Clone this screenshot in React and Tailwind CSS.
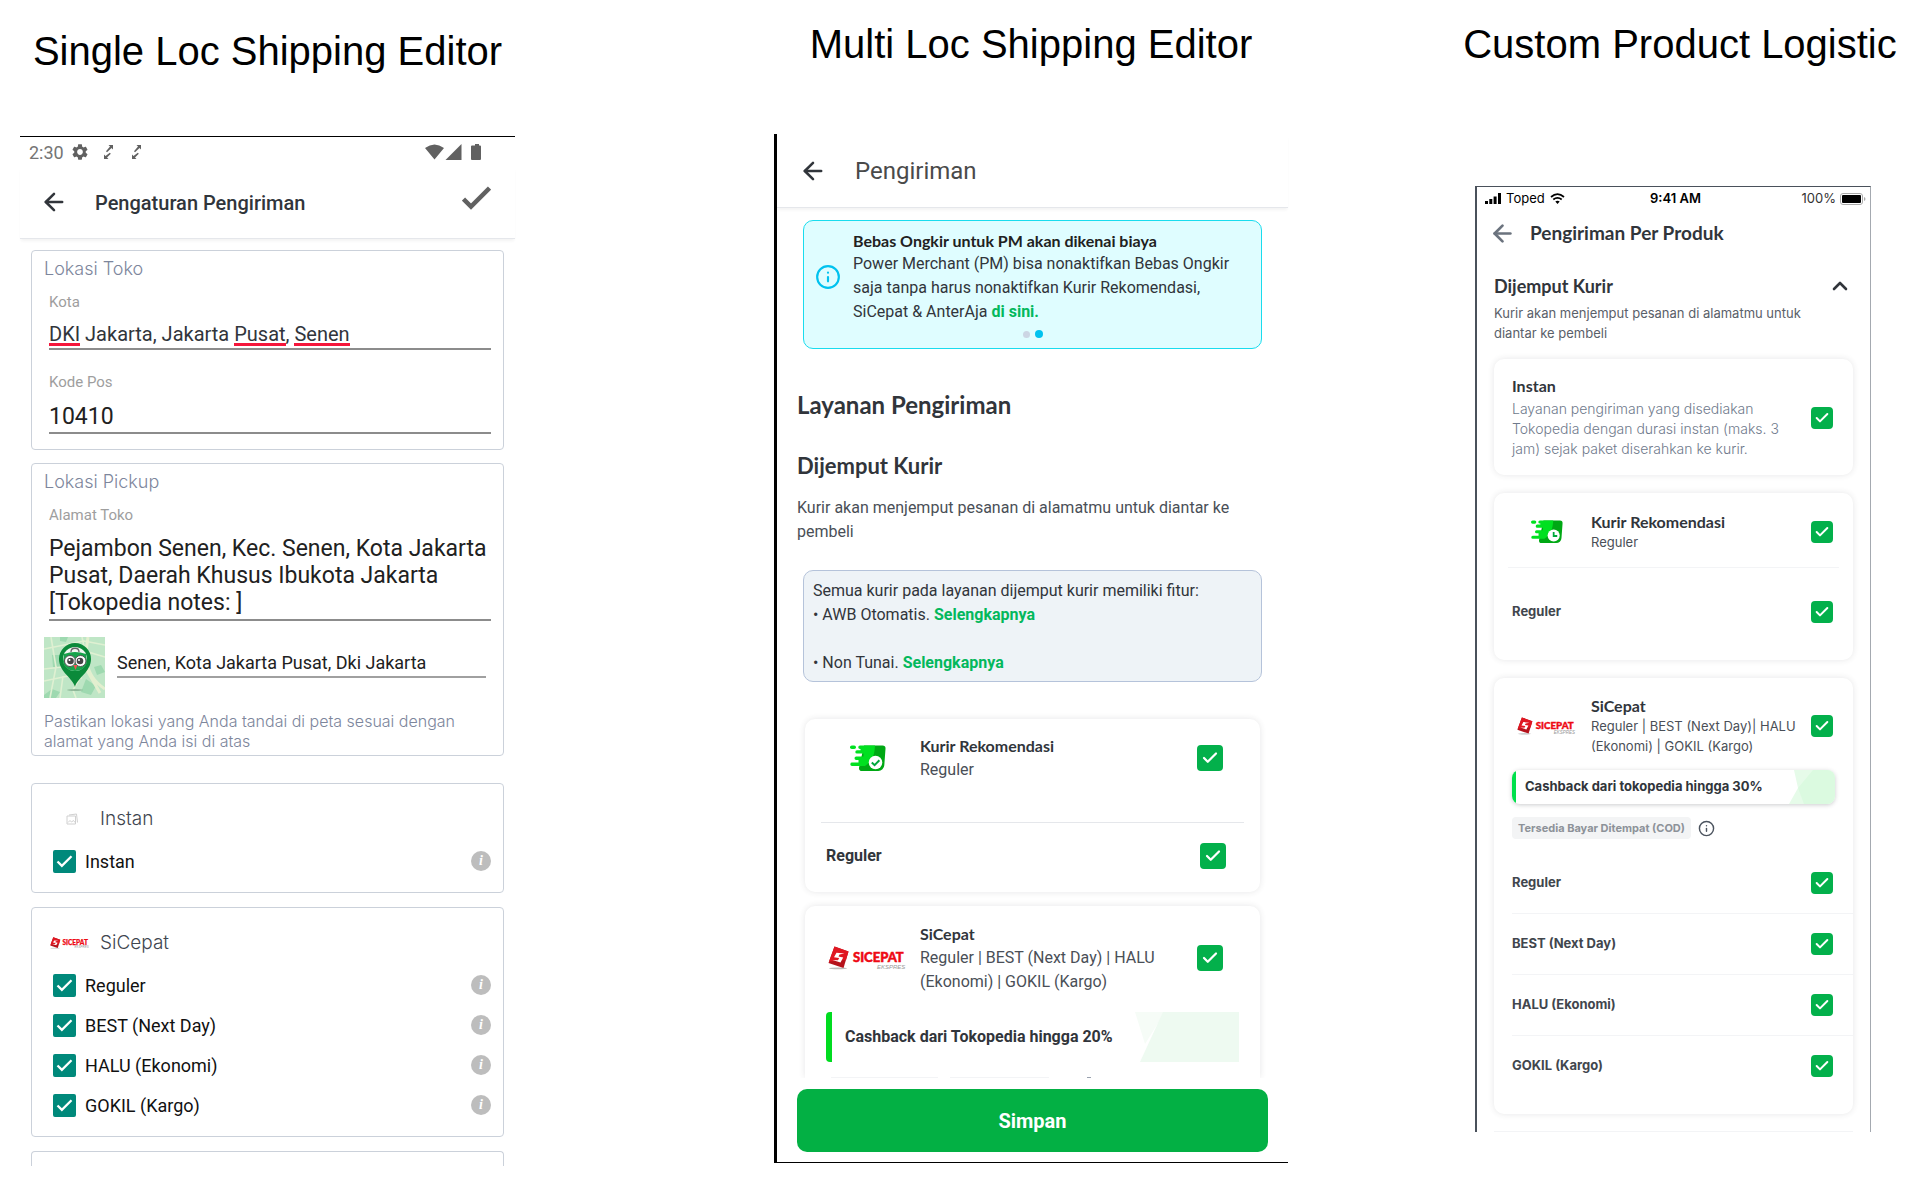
import React from "react";
import { ArrowLeft, Check, ChevronUp, Info } from "lucide-react";

const ROBOTO = "font-['Roboto',sans-serif]";
const INTER = "font-['Inter',sans-serif]";
const LATO = "font-['Lato',sans-serif]";

function Title({ children }) {
  return (
    <h1 className="text-center font-['Liberation_Sans',sans-serif] text-[40px] leading-[48px] whitespace-nowrap text-black">
      {children}
    </h1>
  );
}

function TealCheckbox({ id }) {
  return (
    <span className="grid size-[23px] shrink-0">
      <input id={id} type="checkbox" defaultChecked className="peer col-start-1 row-start-1 size-full appearance-none rounded-xs border-2 border-[#00897b] checked:bg-[#00897b]" />
      <Check className="pointer-events-none invisible col-start-1 row-start-1 size-[21px] place-self-center text-white peer-checked:visible" strokeWidth={2.6} strokeLinecap="butt" strokeLinejoin="miter" />
    </span>
  );
}

function GreenCheckbox({ id, label, small }) {
  return (
    <span className={small ? "grid size-[22px] shrink-0" : "grid size-[26px] shrink-0"}>
      <input id={id} aria-label={label} type="checkbox" defaultChecked className="peer col-start-1 row-start-1 size-full appearance-none rounded border-2 border-[#03b04b] checked:bg-[#03b04b]" />
      <Check className={small ? "pointer-events-none invisible col-start-1 row-start-1 size-4 place-self-center text-white peer-checked:visible" : "pointer-events-none invisible col-start-1 row-start-1 size-[18px] place-self-center text-white peer-checked:visible"} strokeWidth={3} />
    </span>
  );
}

function SiCepatLogo({ className }) {
  return (
    <svg viewBox="0 0 80 24" className={className} role="img" aria-label="SiCepat Ekspres">
      <ellipse cx="10" cy="22.4" rx="9" ry="0.8" fill="#bbb" />
      <path d="M6.500 0.500 20.500 5.500 15.500 22 0.500 17Z" fill="#b5121b" />
      <path d="M6.500 0.500 20.500 5.500 18 14 1 15.500Z" fill="#e01722" />
      <path d="M16.500 7.500 8.500 6.800 6 11.200 11.200 12 10 14.200 4.500 14 12.500 16.500 15.200 11.400 10.500 10.500 11.500 8.500Z" fill="#fff" />
      <text x="25" y="15.500" fontFamily="Lato" fontWeight="900" fontSize="13" fill="#ee0a14" stroke="#ee0a14" strokeWidth="0.5">SICEPAT</text>
      <text x="49" y="22.500" fontFamily="Liberation Sans" fontStyle="italic" fontSize="6" fill="#999">EKSPRES</text>
    </svg>
  );
}

function ExpressBox({ className, clock }) {
  return (
    <svg viewBox="0 0 36 27" className={className} role="img" aria-label="Kurir Rekomendasi">
      <path d="M14 .5h18.500a3 3 0 0 1 3 3.300l-1.200 16.500a6 6 0 0 1-6 5.700H12a3 3 0 0 1-3-3.200Z" fill="#00a814" />
      <path d="M10 .5h15c-.5 10-3 16-10 20.500H2a1.700 1.700 0 0 1 0-3.400h6.500v-2.600H6.200a1.700 1.700 0 0 1 0-3.400h7.300V8.600H7a1.700 1.700 0 0 1 0-3.400h3.500V4H10A1.700 1.700 0 0 1 10 .5Z" fill="#00e020" />
      <rect y=".5" width="6" height="3.600" rx="1.800" fill="#00e020" />
      <circle cx="25.500" cy="17.500" r="6.800" fill="#fff" />
      {clock ? (
        <path d="M25.500 13.500V18h4" fill="none" stroke="#00a83c" strokeWidth="2" />
      ) : (
        <path d="m21.800 17.500 2.800 2.700 4.800-5" fill="none" stroke="#00a83c" strokeWidth="2" />
      )}
    </svg>
  );
}

function MapThumb() {
  return (
    <svg viewBox="0 0 61 61" className="size-[61px] shrink-0" role="img" aria-label="Peta lokasi">
      <rect width="61" height="61" fill="#bfe6c6" />
      <path d="M0 58 8 52 16 55 12 61H0ZM42 42l10 7-5 9-10-3ZM8 18h8v12H9ZM16 0h8l-2 5-6-1ZM50 30l7-2 4 7-8 3Z" fill="#9ed9b0" />
      <path d="M0 12 40 4 61 8M0 44l24-5 14 2M6 61 12 30 7 0M38 0l3 14 20 6M16 61l3-22M0 32l18-2M32 61l-3-8 8-14" fill="none" stroke="#dff0d2" strokeWidth="1.600" />
      <path d="M44 0l-3 22c4 14 8 22 20 30M40 28l16 28" fill="none" stroke="#e3efcf" strokeWidth="3" />
      <ellipse cx="31" cy="53" rx="8" ry=".8" fill="#7fa98a" />
      <path d="M31 50C29 41 15 35 15 22a16 16 0 0 1 32 0c0 13-14 19-16 28Z" fill="#0b8a3a" />
      <circle cx="31" cy="22" r="12" fill="#f2f7f2" />
      <path d="M20 17q11-4 22 0l1 8c-1 6-7 9-12 9s-11-3-12-9Z" fill="#16a34a" />
      <path d="M27 15c0-5 8-5 8 0" fill="none" stroke="#666" strokeWidth="1.300" />
      <circle cx="26" cy="24" r="5.500" fill="#fff" stroke="#555" strokeWidth="1" />
      <circle cx="36.500" cy="24" r="5.500" fill="#fff" stroke="#555" strokeWidth="1" />
      <circle cx="26.500" cy="24" r="3.300" fill="#444" />
      <circle cx="36" cy="24" r="3.300" fill="#444" />
      <circle cx="25.500" cy="23" r="1" fill="#fff" />
      <circle cx="35" cy="23" r="1" fill="#fff" />
      <path d="M29.500 28h4l-2 5Z" fill="#ef5350" />
    </svg>
  );
}

function DebugArrows() {
  return (
    <svg viewBox="0 0 10 16" className="h-4 w-2.5" fill="#616161" aria-hidden="true">
      <path d="M4.500 1H9v4.500L7.500 4 3 8.200 2 7.200 6 2.600ZM0 15v-4.500L1.500 12 5.800 8.800l1 1L3 13.400 4.500 15Z" />
    </svg>
  );
}

function InfoDot({ label }) {
  return (
    <button aria-label={label} className="flex size-5 items-center justify-center rounded-full bg-[#bdbdbd] font-['Liberation_Serif',serif] text-[14px] leading-5 font-bold text-white italic">
      i
    </button>
  );
}

function CourierCard({ icon, name, services }) {
  return (
    <section className="mt-3.5 rounded border border-[#cbd1da] pt-[23px] pb-[11px]">
      <h3 className={"flex h-6 items-center text-[19px] font-light text-[#3f4650] " + INTER}>
        <span className="flex w-[52px] shrink-0 justify-center pl-1">{icon}</span>
        <span className="pl-4">{name}</span>
      </h3>
      <div className="mt-[10px]">
        {services.map((s) => (
          <div key={s} className="flex h-10 items-center pr-3 pl-[21px]">
            <TealCheckbox id={"single-" + name + s} />
            <label htmlFor={"single-" + name + s} className="flex-1 pl-[9px] text-[18px] text-[#111]">{s}</label>
            <InfoDot label={"Info " + s} />
          </div>
        ))}
      </div>
    </section>
  );
}

const sectionLabel = "text-[18px] leading-6 font-light text-[#7d869c] ";

function SingleLoc() {
  return (
    <div className={"mt-[61px] border-t border-black pt-px " + ROBOTO}>
      <div className="flex h-7 items-center pr-[34px] pl-[9px] text-[18px] text-[#757575]">
        <span>2:30</span>
        <svg viewBox="2 2 20 20" className="ml-2 size-4" fill="#616161" aria-hidden="true">
          <path d="M19.140 12.940c.04-.3.06-.61.06-.94 0-.32-.02-.64-.07-.94l2.030-1.580c.18-.14.23-.41.12-.61l-1.920-3.320c-.12-.22-.37-.29-.59-.22l-2.390.96c-.5-.38-1.030-.7-1.620-.94l-.36-2.540c-.04-.24-.24-.41-.48-.41h-3.840c-.24 0-.43.17-.47.41l-.36 2.540c-.59.24-1.130.57-1.620.94l-2.390-.96c-.22-.08-.47 0-.59.22L2.740 8.870c-.12.21-.08.47.12.61l2.030 1.580c-.05.3-.09.63-.09.94s.02.64.07.94l-2.030 1.580c-.18.14-.23.41-.12.61l1.920 3.320c.12.22.37.29.59.22l2.390-.96c.5.38 1.030.7 1.620.94l.36 2.540c.05.24.24.41.48.41h3.840c.24 0 .44-.17.47-.41l.36-2.540c.59-.24 1.130-.56 1.620-.94l2.390.96c.22.08.47 0 .59-.22l1.920-3.320c.12-.22.07-.47-.12-.61l-2.010-1.580zM12 15.600c-1.980 0-3.600-1.620-3.600-3.600s1.620-3.600 3.600-3.600 3.600 1.620 3.600 3.600-1.620 3.600-3.600 3.600z" />
        </svg>
        <span className="ml-4 flex gap-[18px]"><DebugArrows /><DebugArrows /></span>
        <svg viewBox="0 0 56 16" className="ml-auto h-4 w-14" fill="#616161" aria-hidden="true">
          <path d="M0 4Q9.500-3 19 4L9.500 15.500ZM36.500 0v16H20.500ZM48 1.500h2V0h4v1.500h1a1 1 0 0 1 1 1V15a1 1 0 0 1-1 1h-8a1 1 0 0 1-1-1V2.500a1 1 0 0 1 1-1Z" />
        </svg>
      </div>
      <header className="flex h-[73px] items-center border-b border-gray-200 pr-6 pl-5 shadow-[0_3px_3px_-1px_rgba(0,0,0,0.05)]">
        <button aria-label="Kembali" className="text-[#31353b]"><ArrowLeft className="size-7" strokeWidth={2.2} /></button>
        <h2 className="flex-1 pt-px pl-[27px] text-[20px] font-medium text-[#31353b]">Pengaturan Pengiriman</h2>
        <button aria-label="Simpan pengaturan">
          <svg viewBox="0 0 29 24" className="mb-2 h-6 w-[29px]" fill="none" stroke="#616161" strokeWidth="4.500" aria-hidden="true">
            <path d="M1.500 13 9 20.500 27.500 2" />
          </svg>
        </button>
      </header>
      <div className="px-[11px] pt-[11px]">
        <section className="rounded border border-[#cbd1da] px-3 pt-1.5 pb-[15px]">
          <h3 className={sectionLabel + INTER}>Lokasi Toko</h3>
          <div className="pl-[5px]">
            <div id="kota" className="mt-[11px] text-[15px] leading-5 text-[#9e9e9e]">Kota</div>
            <div role="textbox" aria-labelledby="kota" contentEditable suppressContentEditableWarning spellCheck={false} className="mt-2 border-b-2 border-[#8c8c8c] text-[20px] leading-7 text-[#31353b] outline-none">
              <span className="inline-block h-[26px] border-b-3 border-[#f5163b]">DKI</span> Jakarta, Jakarta{" "}
              <span className="inline-block h-[26px] border-b-3 border-[#f5163b]">Pusat</span>,{" "}
              <span className="inline-block h-[26px] border-b-3 border-[#f5163b]">Senen</span>
            </div>
            <label htmlFor="pos" className="mt-[22px] block text-[15px] leading-5 text-[#9e9e9e]">Kode Pos</label>
            <input id="pos" defaultValue="10410" className="mt-[10px] block h-8 w-full border-b-2 border-[#8c8c8c] text-[23px] text-[#212121] outline-none" />
          </div>
        </section>
        <section className="mt-[13px] rounded border border-[#cbd1da] px-3 pt-1.5 pb-1">
          <h3 className={sectionLabel + INTER}>Lokasi Pickup</h3>
          <div className="pl-[5px]">
            <label htmlFor="alamat" className="mt-[11px] block text-[15px] leading-5 text-[#9e9e9e]">Alamat Toko</label>
            <textarea id="alamat" rows={3} defaultValue="Pejambon Senen, Kec. Senen, Kota Jakarta Pusat, Daerah Khusus Ibukota Jakarta [Tokopedia notes: ]" className="mt-[10px] block w-full resize-none overflow-hidden border-b-2 border-[#8c8c8c] pb-[3px] text-[23px] leading-[27px] text-[#212121] outline-none" />
          </div>
          <div className="mt-4 flex items-start gap-3 pr-[5px]">
            <MapThumb />
            <input aria-label="Lokasi peta" defaultValue="Senen, Kota Jakarta Pusat, Dki Jakarta" className="mt-3 h-[29px] min-w-0 flex-1 border-b-2 border-[#a0a0a0] text-[18px] text-[#212121] outline-none" />
          </div>
          <p className={"mt-[13px] text-[16px] leading-5 font-light text-[#7d869c] " + INTER}>
            Pastikan lokasi yang Anda tandai di peta sesuai dengan alamat yang Anda isi di atas
          </p>
        </section>
        <div className="mt-[27px]">
          <CourierCard
            icon={
              <svg viewBox="0 0 12 12" className="ml-6 size-3 shrink-0" fill="none" stroke="#d0d0d0" aria-hidden="true">
                <path d="M3 2 10.500 1l1 8.500M1 3h8.500v8H1Zm1 6.500 2-2 1.500 1.500 2-1.500 1.500 2" />
              </svg>
            }
            name="Instan"
            services={["Instan"]}
          />
          <CourierCard icon={<SiCepatLogo className="ml-5 h-3 w-10 shrink-0" />} name="SiCepat" services={["Reguler", "BEST (Next Day)", "HALU (Ekonomi)", "GOKIL (Kargo)"]} />
          <div className="mt-3.5 h-[15px] rounded-t border border-b-0 border-[#cbd1da]" />
        </div>
      </div>
    </div>
  );
}

function MultiCourier({ id, logo, name, desc, className }) {
  return (
    <div className={"flex items-center pr-[37px] text-[16px] leading-6 " + className}>
      <span className="flex w-[115px] shrink-0 justify-center pl-2.5">{logo}</span>
      <div className="flex-1">
        <label htmlFor={id} className={"block font-bold text-[#31353b] " + LATO}>{name}</label>
        <p className="max-w-[240px] text-[#4a4f57]">{desc}</p>
      </div>
      <GreenCheckbox id={id} />
    </div>
  );
}

const card = "rounded-[10px] bg-white shadow-[0_0_6px_rgba(49,53,59,0.12)]";

function MultiLoc() {
  return (
    <div className={"mt-[66px] border-b border-l-3 border-black " + ROBOTO}>
      <header className="flex h-[74px] items-center border-b border-gray-200 pl-[22px] shadow-[0_3px_3px_-1px_rgba(0,0,0,0.05)]">
        <button aria-label="Kembali" className="text-[#31353b]"><ArrowLeft className="size-7" strokeWidth={2.2} /></button>
        <h2 className="pl-7 text-[24px] text-[#4a4a4a]">Pengiriman</h2>
      </header>
      <div className="mx-[26px] mt-3 rounded-[10px] border border-[#19dcee] bg-[#dffdff] pt-[9px] pb-2.5">
        <div className="flex items-center gap-3 pl-[11px]">
          <Info className="size-[26px] shrink-0 text-[#00c2ef]" strokeWidth={2} />
          <div className="text-[16px] leading-6 text-[#31353b]">
            <h3 className={"leading-[22px] font-bold text-[#212121] " + LATO}>Bebas Ongkir untuk PM akan dikenai biaya</h3>
            <p className="max-w-[380px]">
              Power Merchant (PM) bisa nonaktifkan Bebas Ongkir saja tanpa harus nonaktifkan Kurir Rekomendasi, SiCepat &amp; AnterAja{" "}
              <a href="#pm" className="font-bold text-[#03b85c]">di sini.</a>
            </p>
          </div>
        </div>
        <div className="mt-1.5 flex h-2 items-center justify-center gap-[5px]">
          <span className="size-[7px] rounded-full bg-[#ccd6e4]" />
          <span className="size-2 rounded-full bg-[#00c2ef]" />
        </div>
      </div>
      <div className="px-5">
        <h2 className={"mt-[42px] text-[24px] leading-7 font-bold text-[#31353b] " + LATO}>Layanan Pengiriman</h2>
        <h3 className={"mt-[33px] text-[22px] leading-7 font-bold text-[#31353b] " + LATO}>Dijemput Kurir</h3>
        <p className="mt-4 max-w-[440px] text-[16px] leading-6 text-[#4a4f57]">Kurir akan menjemput pesanan di alamatmu untuk diantar ke pembeli</p>
      </div>
      <div className="mx-[26px] mt-[26px] rounded-[10px] border border-[#b5c3da] bg-[#eef3f7] px-[9px] pt-2 pb-1.5 text-[16px] leading-6 text-[#31353b]">
        <p>Semua kurir pada layanan dijemput kurir memiliki fitur:</p>
        <p>• AWB Otomatis. <a href="#awb" className="font-bold text-[#03b85c]">Selengkapnya</a></p>
        <p className="mt-6">• Non Tunai. <a href="#tunai" className="font-bold text-[#03b85c]">Selengkapnya</a></p>
      </div>
      <section className={"mx-7 mt-[37px] pb-[3px] " + card}>
        <MultiCourier className="pt-[15px]" id="multi-rek" logo={<ExpressBox className="h-[27px] w-9" />} name="Kurir Rekomendasi" desc="Reguler" />
        <div className="mx-4 mt-10 border-t border-gray-200" />
        <div className="flex h-[66px] items-center justify-between pr-[34px] pl-[21px]">
          <label htmlFor="multi-reg" className="text-[16px] font-bold text-[#31353b]">Reguler</label>
          <GreenCheckbox id="multi-reg" />
        </div>
      </section>
      <div className="overflow-hidden px-7 pt-3.5">
        <section className="rounded-t-[10px] bg-white shadow-[0_0_6px_rgba(49,53,59,0.12)]">
          <MultiCourier className="pt-4" id="multi-sicepat" logo={<SiCepatLogo className="h-6 w-20" />} name="SiCepat" desc="Reguler | BEST (Next Day) | HALU (Ekonomi) | GOKIL (Kargo)" />
          <div className="mt-[18px] mr-[21px] ml-[21px] flex h-[50px] items-stretch justify-between">
            <p className="flex items-center rounded-l border-l-6 border-[#00dc20] pl-[13px] text-[16px] font-bold text-[#31353b]">Cashback dari Tokopedia hingga 20%</p>
            <svg viewBox="0 0 104 50" className="h-[50px] w-[104px]" aria-hidden="true">
              <path d="M0 0h30L10 32Z" fill="#f6fcf7" />
              <path d="M28 0h76v50H5Z" fill="#eefaf1" />
            </svg>
          </div>
          <div className="mt-[15px] flex h-px gap-3 pl-[26px]">
            <span className="w-[107px] bg-gray-100" />
            <span className="w-[99px] bg-gray-100" />
            <span className="ml-[26px] w-1 bg-gray-400" />
          </div>
        </section>
      </div>
      <div className="px-5 pt-[11px] pb-[10px]">
        <button className="block h-[63px] w-full rounded-[10px] bg-[#03b044] text-[20px] font-bold text-white">Simpan</button>
      </div>
    </div>
  );
}

function ProductCourier({ id, logo, name, desc, className }) {
  return (
    <div className={"flex items-center pr-5 leading-5 " + className}>
      <span className="flex w-[97px] shrink-0 justify-center pl-2">{logo}</span>
      <div className="flex-1">
        <label htmlFor={id} className={"block text-[16px] font-bold text-[#31353b] " + LATO}>{name}</label>
        <p className="max-w-[212px] text-[13px] whitespace-pre-line text-[#4a4f57]">{desc}</p>
      </div>
      <GreenCheckbox id={id} small />
    </div>
  );
}

function ProductLogistic() {
  return (
    <div className={"mt-[118px] mr-7 ml-3.5 border-t border-r border-l-2 border-[#4a515b] border-r-[#a4a9b0] " + INTER}>
      <div className="grid h-[23px] grid-cols-3 items-center pr-1 pl-2 text-[13px] text-black">
        <span className="flex items-center gap-[5px]">
          <svg viewBox="0 0 16 11" className="h-[11px] w-4" aria-hidden="true">
            <path d="M0 8h3v3H0ZM4.300 6h3v5h-3ZM8.600 3.500h3V11h-3ZM13 0h3v11h-3Z" />
          </svg>
          Toped
          <svg viewBox="0 0 15 11" className="h-[11px] w-[15px]" aria-hidden="true">
            <path d="M1 4Q7.500-1.800 14 4M3.300 6.500q4.200-3.400 8.400 0" fill="none" stroke="#000" strokeWidth="1.700" />
            <path d="M5.300 8.600q2.200-1.700 4.400 0L7.500 11Z" />
          </svg>
        </span>
        <span className="text-center font-semibold">9:41 AM</span>
        <span className="flex items-center justify-end gap-1 text-[#333]">
          100%
          <svg viewBox="0 0 26 12" className="h-3 w-[26px]" aria-hidden="true">
            <rect x=".5" y=".5" width="22" height="11" rx="2.500" fill="none" stroke="#aaa" />
            <rect x="2" y="2" width="19" height="8" rx="1" />
            <path d="M24 4v4q1.500-.5 1.500-2T24 4Z" fill="#aaa" />
          </svg>
        </span>
      </div>
      <header className="flex h-[46px] items-center pl-3">
        <button aria-label="Kembali" className="text-[#6b737e]"><ArrowLeft className="size-[27px]" strokeWidth={2.4} /></button>
        <h2 className={"pl-3.5 text-[19px] font-bold text-[#31353b] " + LATO}>Pengiriman Per Produk</h2>
      </header>
      <div className="mt-[18px] pr-[18px] pl-[17px]">
        <div className="flex items-center justify-between">
          <h3 className={"text-[18px] leading-6 font-bold text-[#31353b] " + LATO}>Dijemput Kurir</h3>
          <button aria-label="Tutup bagian"><ChevronUp className="size-6 text-[#31353b]" strokeWidth={2.6} /></button>
        </div>
        <p className="mt-[5px] max-w-[320px] text-[13px] leading-5 text-[#5a6069]">Kurir akan menjemput pesanan di alamatmu untuk diantar ke pembeli</p>
      </div>
      <div className="overflow-hidden px-[17px] pt-4">
        <section className={"flex items-center pt-[17px] pr-5 pb-4 pl-[18px] " + card}>
          <div className="flex-1">
            <label htmlFor="prod-instan" className={"block text-[16px] leading-5 font-bold text-[#31353b] " + LATO}>Instan</label>
            <p className="mt-[3px] max-w-[272px] text-[14px] leading-5 font-light text-[#6f7a8c]">Layanan pengiriman yang disediakan Tokopedia dengan durasi instan (maks. 3 jam) sejak paket diserahkan ke kurir.</p>
          </div>
          <GreenCheckbox id="prod-instan" small />
        </section>
        <section className={"mt-[18px] pb-1 " + card}>
          <ProductCourier className="pt-[19px]" id="prod-rek" logo={<ExpressBox clock className="h-6 w-8" />} name="Kurir Rekomendasi" desc="Reguler" />
          <div className="mx-3.5 mt-[15px] border-t border-gray-100" />
          <div className="flex h-[88px] items-center justify-between pr-5 pl-[18px]">
            <label htmlFor="prod-reg" className="text-[13px] font-bold text-[#41464d]">Reguler</label>
            <GreenCheckbox id="prod-reg" small />
          </div>
        </section>
        <section className={"mt-[18px] pb-[17px] " + card}>
          <ProductCourier className="pt-[18px]" id="prod-sicepat" logo={<SiCepatLogo className="h-[18px] w-[60px]" />} name="SiCepat" desc={"Reguler | BEST (Next Day)| HALU\n(Ekonomi) | GOKIL (Kargo)"} />
          <div className="mx-[18px] mt-3.5 flex h-[34px] justify-between overflow-hidden rounded-lg bg-white shadow-[0_1px_4px_rgba(49,53,59,0.25)]">
            <p className="flex items-center border-l-4 border-[#00e04b] pl-[9px] text-[13px] font-bold text-[#31353b]">Cashback dari tokopedia hingga 30%</p>
            <svg viewBox="0 0 46 34" className="h-[34px] w-[46px]" aria-hidden="true">
              <path d="M5 0h41v34H0L9 18Z" fill="#e6fbe9" />
              <path d="M24 0h22v34H15L9 18Z" fill="#dbfae0" />
            </svg>
          </div>
          <div className="mt-[13px] flex items-center gap-[7px] pl-[18px]">
            <span className="rounded-sm bg-[#f3f4f5] px-[6px] text-[11px] leading-[22px] font-bold text-[#8d9299]">Tersedia Bayar Ditempat (COD)</span>
            <button aria-label="Info COD"><Info className="size-[17px] text-[#4b535e]" strokeWidth={2} /></button>
          </div>
          <div className="mt-3.5 pl-[18px]">
            {["Reguler", "BEST (Next Day)", "HALU (Ekonomi)", "GOKIL (Kargo)"].map((s) => (
              <div key={s} className="flex h-[61px] items-center justify-between border-b border-gray-100 pr-5 last:border-transparent">
                <label htmlFor={"prod-" + s} className="text-[13px] font-bold text-[#41464d]">{s}</label>
                <GreenCheckbox id={"prod-" + s} small />
              </div>
            ))}
          </div>
        </section>
        <div className="mt-[17px] h-px bg-gray-100" />
      </div>
    </div>
  );
}

export default function App() {
  return (
    <main className="grid grid-cols-[495fr_259fr_514fr_173fr_438fr] items-start bg-white pt-5 pr-[22px] pb-5 pl-5">
      <section className="col-start-1 pt-[7px]">
        <Title>Single Loc Shipping Editor</Title>
        <SingleLoc />
      </section>
      <section className="col-start-3">
        <Title>Multi Loc Shipping Editor</Title>
        <MultiLoc />
      </section>
      <section className="col-start-5">
        <Title>Custom Product Logistic</Title>
        <ProductLogistic />
      </section>
    </main>
  );
}
